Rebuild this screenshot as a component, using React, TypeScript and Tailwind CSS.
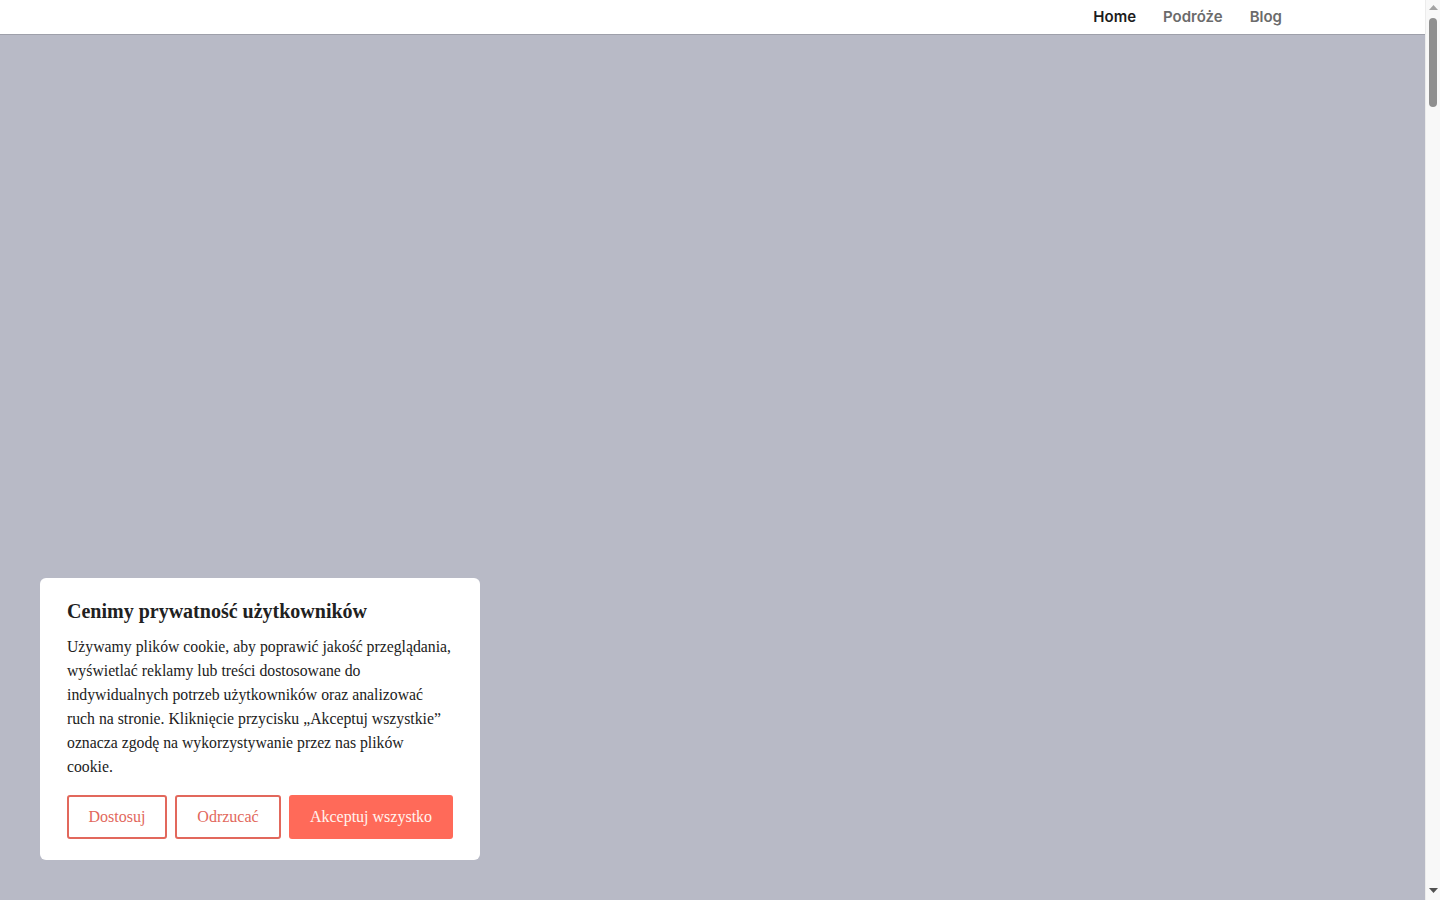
import React from 'react'

const navLinks = [
  { label: 'Home', active: true },
  { label: 'Podróże', active: false },
  { label: 'Blog', active: false },
]

const Header = () => {
  return (
    <header className="relative z-20 h-[35px] shrink-0 bg-white border-b border-[#9ea0aa]">
      <nav className="flex h-full items-center justify-end pr-[143px] gap-[27px] font-['Inter',sans-serif] text-[15px] font-semibold">
        {navLinks.map((l) => (
          <a key={l.label} href="#" className={l.active ? 'text-[#1c1c1c]' : 'text-[#6b6b6b]'}>
            {l.label}
          </a>
        ))}
      </nav>
    </header>
  )
}

const ScrollRail = () => {
  return (
    <div className="flex w-[15px] shrink-0 flex-col items-center bg-[#f8f8f8] border-l border-[#ececec]">
      <svg width="9" height="6" viewBox="0 0 9 6" className="mt-[5px]">
        <path d="M0 5 L4.5 0 L9 5 Z" fill="#a3a3a3" />
      </svg>
      <div className="mt-[7px] h-[89px] w-[8px] rounded-full bg-[#8f8f8f]" />
      <div className="flex-1" />
      <svg width="9" height="6" viewBox="0 0 9 6" className="mb-[6px]">
        <path d="M0 0 L9 0 L4.5 5 Z" fill="#505050" />
      </svg>
    </div>
  )
}

const CookieBanner = () => {
  return (
    <div className="absolute left-[40px] bottom-[40px] z-30 w-[440px] rounded-md bg-white px-[27px] pt-[19px] pb-[21px] font-['Liberation_Serif',serif] text-[#212121]">
      <h2 className="text-[20px] font-bold leading-[28px]">Cenimy prywatność użytkowników</h2>
      <p className="mt-[10px] whitespace-nowrap text-[15.75px] leading-[24px]">
        Używamy plików cookie, aby poprawić jakość przeglądania,
        <br />
        wyświetlać reklamy lub treści dostosowane do
        <br />
        indywidualnych potrzeb użytkowników oraz analizować
        <br />
        ruch na stronie. Kliknięcie przycisku „Akceptuj wszystkie”
        <br />
        oznacza zgodę na wykorzystywanie przez nas plików
        <br />
        cookie.
      </p>
      <div className="mt-[16px] flex gap-[8px] text-[16px]">
        <button className="h-[44px] w-[100px] rounded-[3px] border-2 border-[#e2685c] text-[#e2685c]">Dostosuj</button>
        <button className="h-[44px] w-[106px] rounded-[3px] border-2 border-[#e2685c] text-[#e2685c]">Odrzucać</button>
        <button className="h-[44px] w-[164px] rounded-[3px] bg-[#ff6a59] text-[#fff4ef]">Akceptuj wszystko</button>
      </div>
    </div>
  )
}

export default function App() {
  return (
    <div className="flex h-screen w-full overflow-hidden bg-white">
      <div className="relative flex flex-1 flex-col">
        <Header />
        {/* dimmed backdrop behind the consent dialog */}
        <div className="flex-1 bg-[#b8bac6]" />
        <CookieBanner />
      </div>
      <ScrollRail />
    </div>
  )
}
